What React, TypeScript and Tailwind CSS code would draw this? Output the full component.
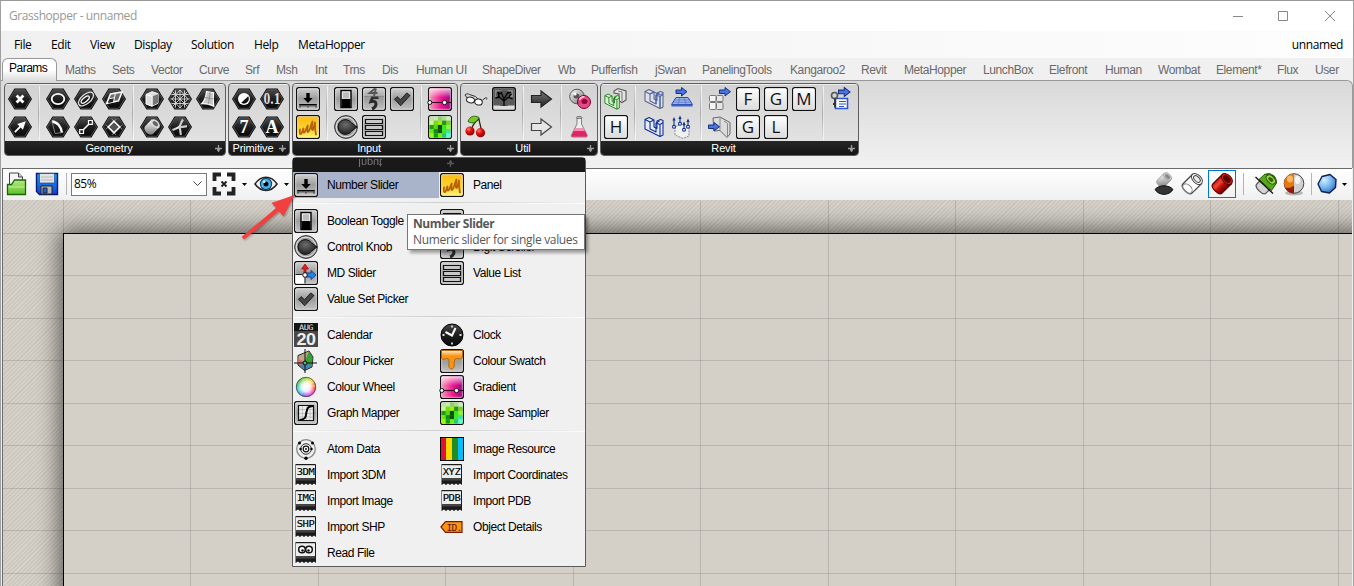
import React from "react";

type IconFn = () => React.ReactElement;

const S = ({ children }: { children?: React.ReactNode }) => (
  <svg width="24" height="24" viewBox="0 0 24 24" className="block shrink-0 overflow-visible">
    {children}
  </svg>
);

/* ---------- shared gradients ---------- */
const Defs = () => (
  <svg className="absolute h-0 w-0">
    <defs>
      <linearGradient id="hex" x1="0" y1="0" x2="0" y2="1">
        <stop offset="0" stopColor="#4a4a4a" />
        <stop offset=".5" stopColor="#1e1e1e" />
        <stop offset="1" stopColor="#080808" />
      </linearGradient>
      <linearGradient id="tile" x1="0" y1="0" x2="0" y2="1">
        <stop offset="0" stopColor="#d2d2d2" />
        <stop offset=".5" stopColor="#9c9c9c" />
        <stop offset="1" stopColor="#c4c4c4" />
      </linearGradient>
      <linearGradient id="lite" x1="0" y1="0" x2="0" y2="1">
        <stop offset="0" stopColor="#ffffff" />
        <stop offset=".5" stopColor="#ececec" />
        <stop offset="1" stopColor="#dadada" />
      </linearGradient>
      <linearGradient id="gold" x1="0" y1="0" x2="0" y2="1">
        <stop offset="0" stopColor="#fdb913" />
        <stop offset=".6" stopColor="#ffd52e" />
        <stop offset="1" stopColor="#fff27a" />
      </linearGradient>
      <linearGradient id="steel" x1="0" y1="0" x2="1" y2="1">
        <stop offset="0" stopColor="#ffffff" />
        <stop offset="1" stopColor="#6e6e6e" />
      </linearGradient>
      <linearGradient id="red" x1="0" y1="0" x2="1" y2="0">
        <stop offset="0" stopColor="#d01810" />
        <stop offset=".3" stopColor="#f04838" />
        <stop offset=".6" stopColor="#b80c08" />
        <stop offset="1" stopColor="#700000" />
      </linearGradient>
      <linearGradient id="green" x1="0" y1="0" x2="0" y2="1">
        <stop offset="0" stopColor="#b4ea80" />
        <stop offset="1" stopColor="#5fbf25" />
      </linearGradient>
      <linearGradient id="pink" x1="0" y1="0" x2="1" y2="0">
        <stop offset="0" stopColor="#f0a4bc" />
        <stop offset=".55" stopColor="#f2148c" />
        <stop offset="1" stopColor="#8e0a84" />
      </linearGradient>
      <linearGradient id="gloss" x1="0" y1="0" x2="0" y2="1">
        <stop offset="0" stopColor="#ffffff" stopOpacity=".75" />
        <stop offset="1" stopColor="#ffffff" stopOpacity="0" />
      </linearGradient>
      <linearGradient id="dark" x1="0" y1="0" x2="0" y2="1">
        <stop offset="0" stopColor="#777777" />
        <stop offset="1" stopColor="#222222" />
      </linearGradient>
      <linearGradient id="blue" x1="0" y1="0" x2="0" y2="1">
        <stop offset="0" stopColor="#1c9cf0" />
        <stop offset="1" stopColor="#1040d8" />
      </linearGradient>
      <radialGradient id="knob" cx=".4" cy=".35" r=".7">
        <stop offset="0" stopColor="#6c6c6c" />
        <stop offset="1" stopColor="#1a1a1a" />
      </radialGradient>
      <radialGradient id="cherry" cx=".35" cy=".3" r=".8">
        <stop offset="0" stopColor="#ff7868" />
        <stop offset=".4" stopColor="#e01010" />
        <stop offset="1" stopColor="#780000" />
      </radialGradient>
      <radialGradient id="ball" cx=".35" cy=".3" r=".8">
        <stop offset="0" stopColor="#d4f0ff" />
        <stop offset=".5" stopColor="#78b8f0" />
        <stop offset="1" stopColor="#2a64b8" />
      </radialGradient>
      <radialGradient id="shade" cx=".5" cy=".5" r=".5">
        <stop offset="0" stopColor="#ffffff" />
        <stop offset=".45" stopColor="#ffffff" stopOpacity=".9" />
        <stop offset="1" stopColor="#ffffff" stopOpacity="0" />
      </radialGradient>
    </defs>
  </svg>
);

const Hex = ({ children }: { children?: React.ReactNode }) => (
  <S>
    <path d="M6.5 1.5h11L24 12l-6.5 10.5h-11L0 12z" fill="#0a0a0a" />
    <path d="M7.2 2.7h9.6L22.6 12l-5.8 9.3H7.2L1.4 12z" fill="url(#hex)" stroke="#5c5c5c" strokeWidth=".8" />
    {children}
  </S>
);

const Tile = ({ fill = "url(#tile)", children }: { fill?: string; children?: React.ReactNode }) => (
  <S>
    <rect x=".6" y=".6" width="22.8" height="22.8" rx="2.2" fill={fill} stroke="#111" strokeWidth="1.2" />
    <rect x="1.7" y="1.7" width="20.6" height="20.6" rx="1.2" fill="none" stroke="#fff" strokeOpacity=".55" />
    {children}
  </S>
);

/* ---------- geometry ---------- */
const PointIcon: IconFn = () => (
  <Hex><path d="M8.6 8.6l6.8 6.8M15.4 8.6l-6.8 6.8" stroke="#fff" strokeWidth="2.8" /></Hex>
);
const VectorIcon: IconFn = () => (
  <Hex><path d="M6.2 16.500l5.200-5.200-2.200-2.200 8.600-2.900-2.900 8.600-2.200-2.200-5.200 5.200z" fill="#fff" /></Hex>
);
const CircleIcon: IconFn = () => (
  <Hex><ellipse cx="12" cy="12" rx="6.3" ry="5.2" fill="none" stroke="#fff" strokeWidth="1.8" /></Hex>
);
const OrbitIcon: IconFn = () => (
  <Hex>
    <g transform="rotate(-40 12 12)" fill="none" stroke="#ddd">
      <ellipse cx="12" cy="12" rx="9" ry="4.6" strokeWidth="1.3" />
      <ellipse cx="11" cy="12" rx="5" ry="2.1" strokeWidth="1.3" stroke="#fff" />
    </g>
  </Hex>
);
const RectIcon: IconFn = () => (
  <Hex>
    <path d="M4.500 16.500l4-9.500 11.500-2-3.500 8.800z" fill="#999" fillOpacity=".6" stroke="#fff" strokeWidth="1.500" />
    <path d="M6 16l2-4.600 4-.8-1 4.400z" fill="#222" />
    <path d="M7.500 11.600l5-.9.900-4.300M11.500 15l1-4.300" stroke="#fff" fill="none" />
  </Hex>
);
const ArcIcon: IconFn = () => (
  <Hex>
    <path d="M6 6.5c5 .4 9.5 5 10 11.5" fill="none" stroke="#fff" strokeWidth="2.4" />
    <path d="M6 6.5l3 12M9 18.500l8-1" stroke="#888" strokeWidth=".9" />
  </Hex>
);
const LineIcon: IconFn = () => (
  <Hex>
    <path d="M8 16l8-8" stroke="#fff" strokeWidth="1.6" />
    <path d="M5.7 14.7h3.8v3.8H5.7zM14.5 5.5h3.8v3.8h-3.8z" fill="#222" stroke="#fff" strokeWidth="1.2" />
  </Hex>
);
const PlaneIcon: IconFn = () => (
  <Hex>
    <path d="M4 9.8L14.2 20M9.8 4L20 14.2M4 14.2L14.2 4M9.8 20L20 9.8" stroke="#aaa" strokeWidth=".8" />
    <path d="M12 6.2l5.8 5.8-5.8 5.8L6.2 12z" fill="#555" stroke="#fff" strokeWidth="1.6" />
  </Hex>
);
const BoxIcon: IconFn = () => (
  <Hex>
    <path d="M6 7.5l6-2.8 6 2v9.6l-6.2 3L6 17z" fill="#ddd" stroke="#fff" />
    <path d="M12.2 9.4L18 7v9l-6 3z" fill="#777" />
    <path d="M6 7.5l6.2 1.9v9.8" stroke="#fff" fill="none" />
  </Hex>
);
const MeshIcon: IconFn = () => (
  <Hex>
    <path d="M7.5 3.5v17M12 3v18M16.5 3.5v17M3.5 7.5h17M2.5 12h19M3.5 16.5h17M5 5l14 14M19 5L5 19M12 3l-8 9 8 9 8-9z" fill="none" stroke="#d8d8d8" strokeWidth=".9" />
  </Hex>
);
const SurfaceIcon: IconFn = () => (
  <Hex>
    <path d="M10.5 4.5l7 1.2c-.4 4-.2 9 .2 13.4-4-1.8-7.5-2.6-12-2.4 3-3 4.3-7 4.8-12.2z" fill="#c4c4c4" stroke="#fff" strokeWidth="1.2" />
    <path d="M14 5.2c-.5 5-.8 8.5-2 12M9 10.5l8.5 1.5" stroke="#888" strokeWidth=".8" fill="none" />
  </Hex>
);
const BrepIcon: IconFn = () => (
  <Hex>
    <g transform="rotate(45 12 12)">
      <path d="M6.5 7v9c0 5 11 5 11 0V7z" fill="url(#steel)" />
      <ellipse cx="12" cy="7.3" rx="5.5" ry="3.3" fill="#ddd" />
      <ellipse cx="12" cy="7.3" rx="3.2" ry="1.9" fill="#666" />
    </g>
  </Hex>
);
const TwistIcon: IconFn = () => (
  <Hex>
    <path d="M4.5 15c3-1.2 5.5-1.8 7-3.500 1.500-2 1.300-4 3.500-7M11.500 11.800c2.500.8 4.500-.4 7.500-.6M11.500 11.800c1 2.500.5 5 1.500 8" fill="none" stroke="#ccc" strokeWidth="2.2" />
    <path d="M8 13.500c2-.8 3-1.500 4-3" stroke="#fff" fill="none" />
  </Hex>
);

/* ---------- primitive ---------- */
const glyph = "Liberation Serif, serif";
const BoolIcon: IconFn = () => (
  <Hex>
    <circle cx="12" cy="12" r="6" fill="#fff" />
    <path d="M16.2 9.200a5 5 0 0 1-7 6.600z" fill="#111" />
  </Hex>
);
const NumberIcon: IconFn = () => (
  <Hex><text x="12" y="17" textAnchor="middle" fontFamily={glyph} fontWeight="700" fontSize="16" textLength="17" lengthAdjust="spacingAndGlyphs" fill="#ddd">0.1</text></Hex>
);
const IntIcon: IconFn = () => (
  <Hex><text x="12" y="18" textAnchor="middle" fontFamily={glyph} fontWeight="700" fontSize="18" fill="#fff">7</text></Hex>
);
const TextIcon: IconFn = () => (
  <Hex><text x="12" y="18" textAnchor="middle" fontFamily={glyph} fontWeight="700" fontSize="18" fill="#fff">A</text></Hex>
);

/* ---------- input ---------- */
const SliderIcon: IconFn = () => (
  <Tile>
    <path d="M10.3 6h3.400v5h3L12 16 7.300 11h3z" fill="#000" />
    <path d="M3.5 17.500h17M4 17v3.500M6 17.500v2M8 17.500v2M10 17.500v2M12 17v3.500M14 17.500v2M16 17.500v2M18 17.500v2M20 17v3.500" stroke="#000" strokeWidth="1" />
  </Tile>
);
const PanelIcon: IconFn = () => (
  <Tile fill="url(#gold)">
    <path d="M4 14.500c-.5 2.500-.2 5 1 4.500 1.200-.6 1.500-4 2.500-5.500-.3 2-.2 4.500.8 4 1.500-1 2-5 3.500-7-.4 3-.8 7 .3 6.500C14 16 15 9 16.500 6.500c-.6 4-1 8.500 0 8.500 1.300-.3 1.500-5 2.500-7.500 0 4 0 8 1 12" fill="none" stroke="#b5620a" strokeWidth="1.800" strokeLinejoin="round" strokeLinecap="round" />
  </Tile>
);
const ToggleIcon: IconFn = () => (
  <Tile>
    <rect x="7" y="3.500" width="10" height="17" fill="#e8e8e8" stroke="#000" strokeWidth="1.4" />
    <path d="M7.500 12h9v8h-9z" fill="#000" />
    <path d="M9 5.500h6v6H9z" fill="#bbb" />
  </Tile>
);
const ScrollerIcon: IconFn = () => (
  <Tile>
    <path d="M13 1.500L7.500 6h8M14 1.500L12 9" fill="none" stroke="#555" strokeWidth="1.800" />
    <path d="M16.500 10.500h-6l-1.500 4c3-.8 5 .2 5 2.500 0 2-1.500 4-4 5" fill="none" stroke="#2a2a2a" strokeWidth="3" />
    <path d="M2 9.700h20" stroke="#777" strokeWidth=".8" />
  </Tile>
);
const CheckIcon: IconFn = () => (
  <Tile><path d="M4.500 12.300l2.700-2.700 3.300 3.200 6.300-6.900 3.200 2.600-9.300 10.200z" fill="#444" stroke="#181818" strokeWidth=".9" /></Tile>
);
const KnobIcon: IconFn = () => (
  <S>
    <circle cx="12" cy="12" r="11.4" fill="#9a9a9a" stroke="#333" strokeWidth="1" />
    <circle cx="12" cy="12" r="9.800" fill="none" stroke="#e4e4e4" strokeWidth="1" />
    <path d="M23 12l-5.500 4.200a7.400 7.400 0 1 1 0-8.400z" fill="url(#knob)" stroke="#111" />
  </S>
);
const ListIcon: IconFn = () => (
  <Tile>
    <path d="M3.500 4.500h17v4h-17zM3.500 10.500h17v4h-17zM3.500 16.500h17v4h-17z" fill="#c8c8c8" stroke="#111" strokeWidth="1.2" />
  </Tile>
);
const GradientIcon: IconFn = () => (
  <Tile fill="url(#pink)">
    <path d="M1.500 1.500h21v9h-21z" fill="url(#gloss)" />
    <path d="M1 15.500h22" stroke="#3a0020" strokeWidth="1.2" />
    <circle cx="1.8" cy="15.500" r="2" fill="#fff" stroke="#111" />
    <circle cx="16.500" cy="15.500" r="2.200" fill="#fff" stroke="#111" />
  </Tile>
);
const SAMPLES = [
  "#b8e8a0", "#c8eca8", "#8cd070", "#a8e080", "#c8f0b8",
  "#d0f4a0", "#70e010", "#a0f000", "#289020", "#70d818",
  "#18a010", "#60d010", "#085008", "#30f010", "#88f830",
  "#60e818", "#188818", "#0c5808", "#40e828", "#30e8a0",
  "#a8f020", "#10a010", "#70f010", "#20c870", "#58ffd0",
];
const SamplerIcon: IconFn = () => (
  <Tile>
    {SAMPLES.map((c, i) => (
      <rect key={i} x={1.5 + (i % 5) * 4.2} y={1.5 + Math.floor(i / 5) * 4.2} width="4.3" height="4.3" fill={c} />
    ))}
  </Tile>
);

/* ---------- util ---------- */
const GlassesIcon: IconFn = () => (
  <S>
    <path d="M3.500 11.500L1 8c1.500-1.500 3-1.500 4.500-.5l6 2 2.500 2.500M18.500 13l3.500-2.500c1 .3 1 1.200.5 2" fill="none" stroke="#333" strokeWidth="1" />
    <ellipse cx="6.500" cy="13" rx="4" ry="2.800" fill="#fff" stroke="#222" transform="rotate(12 6.5 13)" />
    <ellipse cx="14.500" cy="15" rx="3.800" ry="3" fill="#fff" stroke="#222" transform="rotate(12 14.5 15)" />
  </S>
);
const TreeIcon: IconFn = () => (
  <Tile fill="#111">
    <path d="M1.500 1.500h21v18h-21z" fill="#5a5a5a" />
    <path d="M3 3h18v7H3z" fill="#a8a8a8" opacity=".6" />
    <path d="M12 20V11M12 14L6 9M12 14l6-5M12 12L9 5M12 12l4-7M8 10L3.500 11M16 10l4.500 2M9 7L5 5M15 7l4-2M7 9l-1-4M17 9l2.500-2" stroke="#000" strokeWidth="1.3" />
    <path d="M4 7c2-5 14-5 16 0-1 4-3 1-5 4-3-2-4 1-6-1-3 1-5 1-5-3z" fill="#000" fillOpacity=".4" />
    <path d="M1.500 18.500h21v4h-21z" fill="#ddd" /><path d="M7 19c3-1 7-1 10 0z" fill="#000" />
  </Tile>
);
const CherryIcon: IconFn = () => (
  <S>
    <path d="M8 14c0-4 3-7 7-10 .5 4 2 8 2.500 12" fill="none" stroke="#2a1a0a" strokeWidth="1.2" />
    <path d="M4 6.500c2-5.500 6-6.500 11-4-2 4.500-6 7-11 4z" fill="#7cc828" stroke="#2c6a10" />
    <circle cx="6" cy="16" r="4.600" fill="url(#cherry)" />
    <circle cx="16.500" cy="17.700" r="4.600" fill="url(#cherry)" />
  </S>
);
const ArrowDarkIcon: IconFn = () => (
  <S><path d="M1.500 8.500h9.500V4l10.500 8L11 20v-4.500H1.500z" fill="url(#dark)" stroke="#222" strokeWidth="1.2" /></S>
);
const ArrowLiteIcon: IconFn = () => (
  <S><path d="M1.500 8.500h9.500V4l10.500 8L11 20v-4.500H1.500z" fill="#e6e6e6" stroke="#444" strokeWidth="1.2" /></S>
);
const CellsIcon: IconFn = () => (
  <S>
    <circle cx="9" cy="9.500" r="7.300" fill="url(#steel)" stroke="#555" />
    <ellipse cx="8.500" cy="9" rx="3" ry="2.500" fill="#555" /><circle cx="7" cy="7" r="1.600" fill="#fff" />
    <circle cx="16" cy="15" r="6.500" fill="#e83c78" fillOpacity=".9" stroke="#7a0030" />
    <ellipse cx="16.500" cy="14.500" rx="3" ry="2.500" fill="#900040" /><path d="M11.500 13c1-2.500 3-3.500 5-3.200" stroke="#ffc8dc" strokeWidth="1.500" fill="none" />
  </S>
);
const FlaskIcon: IconFn = () => (
  <S>
    <path d="M9 2.500h4.500v6.500l5.500 11c.6 1.500 0 2-1.500 2H5c-1.500 0-2.200-.6-1.500-2L9 9z" fill="#eee" stroke="#666" strokeWidth=".8" />
    <path d="M7 13h8.500l3.500 7c.5 1.200 0 1.800-1 1.800H4.700c-1 0-1.500-.6-1-1.800z" fill="#e02468" />
    <path d="M7 13h8.500l1.500 3H5.500z" fill="#f490b4" />
    <ellipse cx="11.200" cy="2.500" rx="2.800" ry="1" fill="#ccc" stroke="#555" strokeWidth=".8" />
  </S>
);

/* ---------- revit ---------- */
const Letter = ({ c }: { c: string }) => (
  <Tile fill="url(#lite)">
    <text x="12" y="18" textAnchor="middle" fontFamily="Open Sans, sans-serif" fontSize="17" fill="#111">{c}</text>
  </Tile>
);
const LH: IconFn = () => <Letter c="H" />;
const LF: IconFn = () => <Letter c="F" />;
const LG: IconFn = () => <Letter c="G" />;
const LM: IconFn = () => <Letter c="M" />;
const LL: IconFn = () => <Letter c="L" />;

const Wall = ({ stroke, fill }: { stroke: string; fill: string }) => (
  <g fill={fill} stroke={stroke} strokeWidth="1.1" strokeLinejoin="round">
    <path d="M3 4.500l4-2 5 2.500v7l3 1.500V6l3.500-1.500 2.500 1v14.500l-3 1.500L3 14z" />
    <path d="M3 4.500l5 2.500v7l6 3V8l4 1.500v12M8 7l4-2M14 8l3.500-2M18 9.500l3-2" fill="none" />
  </g>
);
const WallGreenIcon: IconFn = () => (
  <S>
    <path d="M10 4l4-2.500 8 2.500v9l-4 2.500-3-1.500V7l-5-1z" fill="#e4e4e4" stroke="#555" strokeWidth="1.1" />
    <path d="M14 4l4 1v9" stroke="#777" fill="none" />
    <g transform="translate(-1.5 5) scale(.8)"><Wall stroke="#187818" fill="#d8f4d0" /></g>
  </S>
);
const WallGreyIcon: IconFn = () => (
  <S>
    <Wall stroke="#5c6684" fill="#dde2ec" />
    <path d="M8 7l4-2 6 3 3-1.500" stroke="#3c60c8" fill="none" />
    <path d="M14 8v9M18 9.500v11" stroke="#3c60c8" />
  </S>
);
const WallBlueIcon: IconFn = () => <S><Wall stroke="#102c9c" fill="#e6eefc" /></S>;
const BlueArrow = () => (
  <path d="M0 2.500h5.500V0L11 4.200 5.500 8.500V6H0z" fill="#4a74dc" stroke="#14308c" />
);
const FloorIcon: IconFn = () => (
  <S>
    <g transform="translate(6 .5)"><BlueArrow /></g>
    <path d="M6 10.500h12l4.500 7h-21z" fill="#9cb4ec" stroke="#2848a8" />
    <path d="M1.500 17.500h21v2h-21z" fill="#3c60c8" />
    <path d="M4.500 13h15M3.500 15.300h17M10 10.500l-2 7M14 10.500l2 7" stroke="#4868c0" strokeWidth=".6" />
  </S>
);
const EdgesIcon: IconFn = () => (
  <S>
    <path d="M5 12l6-3 8 4v8l-6 2.500L5 20z" fill="#f0f0f0" stroke="#888" strokeDasharray="2 1" />
    <path d="M4 12V4M10 8V2M18 12V5M14 15V8" stroke="#14308c" strokeWidth="1.1" />
    <path d="M2.400 5.500L4 2l1.600 3.500zM8.400 4L10 .5 11.600 4zM16.400 7L18 3.500 19.600 7zM12.400 10L14 6.500l1.600 3.500z" fill="#14308c" />
    <path d="M2.700 10.500h2.600v2.600H2.700zM8.700 7.500h2.600v2.600H8.700zM16.700 10.500h2.600v2.600h-2.600zM12.700 13.500h2.600v2.600h-2.600z" fill="#e8f0ff" stroke="#14308c" />
  </S>
);
const GridArrowIcon: IconFn = () => (
  <S>
    <rect x="1.500" y="8.500" width="6.500" height="6" rx="1" fill="#f4f4f4" stroke="#777" />
    <rect x="8.500" y="8.500" width="6.500" height="6" rx="1" fill="#e6e6e6" stroke="#777" />
    <rect x="1.500" y="15.500" width="6.500" height="7" rx="1" fill="#f4f4f4" stroke="#777" />
    <rect x="8.500" y="15.500" width="6.500" height="7" rx="1" fill="#e6e6e6" stroke="#777" />
    <g transform="translate(11.5 .5)"><BlueArrow /></g>
  </S>
);
const PanelArrowIcon: IconFn = () => (
  <S>
    <path d="M5 3l7-1 10 5.500V19l-3 3.500-7-7-6 .5z" fill="#dcdcdc" stroke="#666" />
    <path d="M12 2.500v13M16 6l3.500 2.500v13" stroke="#888" fill="none" />
    <g transform="translate(.5 7.500)"><BlueArrow /></g>
  </S>
);
const KeyDocIcon: IconFn = () => (
  <S>
    <g transform="translate(8.5 .5) scale(1.05)"><BlueArrow /></g>
    <path d="M5.500 11.500h12v10h-12z" fill="#fff" stroke="#2c58d0" strokeWidth="1.6" />
    <path d="M9 14.500h7M9 17h7M9 19.500h5" stroke="#2c58d0" strokeWidth="1.2" />
    <circle cx="4.500" cy="8.500" r="3" fill="none" stroke="#555" strokeWidth="1.6" />
    <path d="M5 11.500v9M5 17h-2" stroke="#333" strokeWidth="1.8" />
  </S>
);

/* ---------- menu only ---------- */
const MDIcon: IconFn = () => (
  <Tile>
    <path d="M1.500 13.500h9v9h-9z" fill="#fff" />
    <path d="M10 13V8H7.500L11 3l3.500 5H12v5z" fill="#e42020" stroke="#8c0000" strokeWidth=".6" />
    <path d="M12 12h5V9.500l5 4.500-5 4.500V16h-5z" fill="#2484e8" stroke="#08308c" strokeWidth=".8" />
    <circle cx="11" cy="14" r="2.300" fill="#fff" stroke="#111" />
    <path d="M1.500 13.500H8M11 16.500v6" stroke="#222" />
  </Tile>
);
const CalendarIcon: IconFn = () => (
  <S>
    <path d="M0 0h24v24H0z" fill="#484848" /><path d="M0 0h24v8H0z" fill="#151515" />
    <text x="12" y="7" textAnchor="middle" fontFamily="DejaVu Sans Mono, monospace" fontSize="7.500" textLength="14" lengthAdjust="spacingAndGlyphs" fill="#eee">AUG</text>
    <text x="12" y="21.500" textAnchor="middle" fontFamily="Liberation Sans, sans-serif" fontWeight="700" fontSize="16" textLength="19" lengthAdjust="spacingAndGlyphs" fill="#eee">20</text>
  </S>
);
const ClockIcon: IconFn = () => (
  <S>
    <circle cx="12" cy="12" r="11" fill="url(#hex)" stroke="#000" />
    <path d="M12 2.500v2M12 19.500v2M2.500 12h2M19.500 12h2" stroke="#ddd" strokeWidth="1.8" />
    <path d="M5.500 9l6.500 3.500L15.500 5" fill="none" stroke="#fff" strokeWidth="2" />
  </S>
);
const PickerIcon: IconFn = () => (
  <S>
    <path d="M4 6.500L15 2l4 6-1 10-7.500 3.500L4 16z" fill="#5c9a48" stroke="#222" />
    <path d="M4.500 7L15 2.500 11 12l-6.500 3z" fill="#c4a48c" />
    <path d="M4.500 10l5 2-1 4-4-.5z" fill="#e86878" />
    <path d="M15 2.500L18.500 8l-.800 9.500L11 13z" fill="#38a038" />
    <path d="M11 13l6.500 4.500-7 3.500-4-4z" fill="#4484c0" />
    <path d="M0 14h23M11 0v24" stroke="#111" />
    <circle cx="11" cy="14" r="2" fill="#50b870" stroke="#111" />
  </S>
);
const WHEEL = ["#b4d820", "#ffc810", "#ff7828", "#ff2850", "#f020b0", "#a838f0", "#4060f0", "#20a0f0", "#10c8d0", "#18c080", "#38b838", "#78c828"];
const WheelIcon: IconFn = () => (
  <S>
    {WHEEL.map((c, i) => (
      <path key={i} d="M12 12L12 2A10 10 0 0 1 17.2 3.450z" fill={c} transform={`rotate(${i * 30} 12 12)`} />
    ))}
    <circle cx="12" cy="12" r="10" fill="url(#shade)" />
    <circle cx="12" cy="12" r="9.700" fill="none" stroke="#4a3a3a" strokeOpacity=".7" />
  </S>
);
const SwatchIcon: IconFn = () => (
  <Tile>
    <path d="M1.500 1.500h21v7c-1.500 2.500-4 1-6 1-2 0-2 2-2.500 5 1 4-1 5.500-2.500 5.500S8 18 9 14.500c0-3 .5-5-2-5-2 0-4 2-5.500 0z" fill="#f89410" stroke="#a85800" strokeWidth=".8" />
    <path d="M2 2h20v5H2z" fill="url(#gloss)" />
  </Tile>
);
const GraphIcon: IconFn = () => (
  <Tile>
    <path d="M4.500 4.500h15v15h-15z" fill="#ececec" stroke="#111" strokeWidth="1.2" />
    <path d="M8.500 5v14M12.500 5v14M16 5v14M5 8.500h14M5 12.500h14M5 16h14" stroke="#aaa" strokeWidth=".6" />
    <path d="M5.500 19c7-1 6-3 7-8s2-5.500 6.500-6" fill="none" stroke="#000" strokeWidth="2" />
  </Tile>
);
const AtomIcon: IconFn = () => (
  <S>
    <circle cx="12" cy="12" r="9.300" fill="none" stroke="#888" strokeWidth="1.3" />
    <circle cx="12" cy="12" r="5.300" fill="none" stroke="#333" />
    <circle cx="12" cy="12" r="2.800" fill="#fff" stroke="#111" strokeWidth="1.2" />
    <circle cx="12" cy="12" r=".9" />
    <circle cx="5.500" cy="6" r="1.500" /><circle cx="18.500" cy="6" r="1.500" />
    <circle cx="6.500" cy="12" r="1.200" /><circle cx="17.500" cy="12" r="1.200" /><circle cx="12" cy="21.200" r="1.700" />
  </S>
);
const BarsIcon: IconFn = () => (
  <S>
    <path d="M0 0h24v24H0z" />
    <path d="M1 1h5v22H1z" fill="#dc143c" /><path d="M6 1h6v22H6z" fill="#ffd700" />
    <path d="M12 1h6v22h-6z" fill="#228b22" /><path d="M18 1h5v22h-5z" fill="#00bfff" />
  </S>
);
const Paper = ({ children }: { children?: React.ReactNode }) => (
  <S>
    <path d="M1.500 1h20l.5 1v20l-2-1.500-2 1.500-2-1.500-2 1.500-2-1.500-2 1.500-2-1.500-2 1.500-2-1.500-2.500 1.500V2z" fill="#1a1a1a" />
    <path d="M2 2.200h19V16H2z" fill="#ededed" /><path d="M2 15h19v2.500H2z" fill="#444" />
    {children}
  </S>
);
const Tag = ({ t }: { t: string }) => (
  <Paper>
    <text x="11.500" y="12" textAnchor="middle" fontFamily="DejaVu Sans Mono, monospace" fontSize="9" textLength="17.500" lengthAdjust="spacingAndGlyphs" stroke="#000" strokeWidth=".15">{t}</text>
  </Paper>
);
const T3DM: IconFn = () => <Tag t="3DM" />;
const TIMG: IconFn = () => <Tag t="IMG" />;
const TSHP: IconFn = () => <Tag t="SHP" />;
const TXYZ: IconFn = () => <Tag t="XYZ" />;
const TPDB: IconFn = () => <Tag t="PDB" />;
const ReadIcon: IconFn = () => (
  <Paper>
    <circle cx="8" cy="8.500" r="3.300" fill="#fff" stroke="#111" strokeWidth="1.5" />
    <circle cx="15" cy="8.500" r="3.300" fill="#fff" stroke="#111" strokeWidth="1.5" />
    <circle cx="8.500" cy="9.500" r="1.200" /><circle cx="14.500" cy="9.500" r="1.200" />
  </Paper>
);
const IDIcon: IconFn = () => (
  <S>
    <path d="M1 12l4.500-5.300h16.500v10.600H5.500z" fill="#ff9410" stroke="#7a1c00" strokeWidth="1.2" />
    <text x="14" y="15.500" textAnchor="middle" fontFamily="DejaVu Sans Mono, monospace" fontSize="9.500" letterSpacing="-.8" fill="#5a1400">ID.</text>
  </S>
);

/* ---------- toolbar ---------- */
const FolderIcon: IconFn = () => (
  <S>
    <path d="M4.500 1h9l4 4v8h-13z" fill="#f6f6f6" stroke="#444" /><path d="M13.500 1v4h4" fill="#ccc" stroke="#444" />
    <path d="M2.500 12.500h4l3-4.500h11v14.500h-18z" fill="url(#green)" stroke="#1c6410" strokeWidth="1.3" />
    <path d="M3.500 15h16" stroke="#c8f0a8" />
  </S>
);
const SaveIcon: IconFn = () => (
  <S>
    <path d="M1.500 1.500h21v21H4.500l-3-3z" fill="url(#blue)" stroke="#0a1c78" strokeWidth="1.4" />
    <path d="M4.500 1.500h15v9.500h-15z" fill="#e4e4e4" stroke="#0c4cb0" strokeWidth=".7" /><path d="M6 5h12M6 8h12" stroke="#bbb" />
    <path d="M6 14h11v8H6z" fill="#b8b8b8" stroke="#222" /><path d="M8 16h4v5H8z" fill="#1c60e0" stroke="#222" />
  </S>
);
const ExtentsIcon: IconFn = () => (
  <S>
    <path d="M2.500 9V2.500H9M15 2.500h6.500V9M21.500 15v6.500H15M9 21.500H2.500V15" fill="none" stroke="#222" strokeWidth="3.8" />
    <path d="M9.500 9.500l5 5M14.500 9.500l-5 5" stroke="#222" strokeWidth="2" />
  </S>
);
const EyeIcon: IconFn = () => (
  <S>
    <path d="M1 12c6-9 16-9 22 0-6 8.500-16 8.500-22 0z" fill="#f4f4f4" stroke="#222" strokeWidth="1.5" />
    <circle cx="12" cy="12" r="5.600" fill="#48b4e8" stroke="#12486c" strokeWidth="1.2" /><circle cx="12" cy="12" r="2.500" />
    <circle cx="10.200" cy="9.800" r="1.300" fill="#dff6ff" />
  </S>
);
const Tube = ({ body, rim, hole, edge }: { body: string; rim: string; hole: string; edge: string }) => (
  <g transform="rotate(45 12 12)" stroke={edge}>
    <path d="M5.500 5v13.500c0 4.300 13 4.300 13 0V5z" fill={body} strokeWidth="1.2" />
    <ellipse cx="12" cy="5" rx="6.500" ry="4.200" fill={rim} /><ellipse cx="12" cy="5" rx="4" ry="2.400" fill={hole} />
  </g>
);
const ShadeOffIcon: IconFn = () => (
  <S>
    <g transform="translate(3 -.5) scale(.74)"><Tube body="url(#steel)" rim="#d4d4d4" hole="#888" edge="#999" /></g>
    <path d="M3 17.500c4-5 14-5 18 0-4 6.500-14 6.500-18 0z" fill="#333" stroke="#111" />
  </S>
);
const WireIcon: IconFn = () => (
  <S>
    <Tube body="#fcfcfc" rim="#fff" hole="#eee" edge="#444" />
    <ellipse cx="7.500" cy="16.500" rx="5.500" ry="3.600" transform="rotate(45 7.5 16.5)" fill="none" stroke="#888" />
  </S>
);
const RedTubeIcon: IconFn = () => <S><Tube body="url(#red)" rim="#d82018" hole="#580000" edge="#5a0000" /></S>;
const HalfTubeIcon: IconFn = () => (
  <S>
    <Tube body="#d4d4d4" rim="#78c028" hole="#306808" edge="#555" />
    <path d="M5 7.500l6-5.500 9 2 2.500 7-5 7.500z" fill="#58a818" stroke="#245c08" />
    <ellipse cx="16.800" cy="7.500" rx="5.500" ry="3.500" transform="rotate(45 16.8 7.5)" fill="#9ad848" stroke="#245c08" />
    <ellipse cx="16.800" cy="7.500" rx="3" ry="1.800" transform="rotate(45 16.8 7.5)" fill="#306808" />
    <path d="M1.500 5l17.500 16.500" stroke="#111" strokeWidth="1.3" />
  </S>
);
const HalfBallIcon: IconFn = () => (
  <S>
    <ellipse cx="12" cy="21" rx="9" ry="2.500" fill="#000" fillOpacity=".25" />
    <circle cx="12" cy="11.500" r="9.800" fill="#d0d0d0" stroke="#444" />
    <path d="M12 1.700a9.800 9.800 0 0 0 0 19.600z" fill="#e8780c" />
    <path d="M3 15.500a9.800 9.800 0 0 0 9 5.800V13.500c-3 2.500-6 3-9 2z" fill="#8c1c04" />
    <ellipse cx="8" cy="7" rx="3" ry="3.500" fill="#ffc878" fillOpacity=".8" /><ellipse cx="15.500" cy="8" rx="2.600" ry="4" fill="#fff" fillOpacity=".8" />
  </S>
);
const BallIcon: IconFn = () => (
  <S><path d="M7 4.500l8-2 6 5-.5 8-6 5.500-8-1.500L3 12z" fill="url(#ball)" stroke="#10205c" strokeWidth="1.4" strokeLinejoin="round" /></S>
);

/* ---------- data ---------- */
const TABS: [string, string][] = [
  ["Maths", "w-[47px]"], ["Sets", "w-[39px]"], ["Vector", "w-[48px]"], ["Curve", "w-[46px]"], ["Srf", "w-[31px]"],
  ["Msh", "w-[39px]"], ["Int", "w-[28px]"], ["Trns", "w-[39px]"], ["Dis", "w-[34px]"], ["Human UI", "w-[66px]"],
  ["ShapeDiver", "w-[76px]"], ["Wb", "w-[33px]"], ["Pufferfish", "w-[64px]"], ["jSwan", "w-[47px]"],
  ["PanelingTools", "w-[88px]"], ["Kangaroo2", "w-[71px]"], ["Revit", "w-[43px]"], ["MetaHopper", "w-[79px]"],
  ["LunchBox", "w-[66px]"], ["Elefront", "w-[56px]"], ["Human", "w-[53px]"], ["Wombat", "w-[58px]"],
  ["Element*", "w-[61px]"], ["Flux", "w-[38px]"], ["User", "w-[30px]"],
];

const MENUS: [string, string][] = [
  ["File", "w-[37px]"], ["Edit", "w-[39px]"], ["View", "w-[44px]"], ["Display", "w-[57px]"],
  ["Solution", "w-[63px]"], ["Help", "w-[44px]"], ["MetaHopper", "w-[80px]"],
];

/* Each column holds its top and bottom icon; a null column is a divider. */
type Column = (IconFn | null)[] | null;
const GROUPS: { name: string; width: string; cols: Column[] }[] = [
  { name: "Geometry", width: "w-[222px]", cols: [[PointIcon, VectorIcon], null, [CircleIcon, ArcIcon], [OrbitIcon, LineIcon], [RectIcon, PlaneIcon], null, [BoxIcon, BrepIcon], [MeshIcon, TwistIcon], [SurfaceIcon, null]] },
  { name: "Primitive", width: "w-[62px]", cols: [[BoolIcon, IntIcon], [NumberIcon, TextIcon]] },
  { name: "Input", width: "w-[166px]", cols: [[SliderIcon, PanelIcon], null, [ToggleIcon, KnobIcon], [ScrollerIcon, ListIcon], [CheckIcon, null], null, [GradientIcon, SamplerIcon]] },
  { name: "Util", width: "w-[138px]", cols: [[GlassesIcon, CherryIcon], [TreeIcon, null], null, [ArrowDarkIcon, ArrowLiteIcon], null, [CellsIcon, FlaskIcon]] },
  { name: "Revit", width: "w-[259px]", cols: [[WallGreenIcon, LH], null, [WallGreyIcon, WallBlueIcon], [FloorIcon, EdgesIcon], null, [GridArrowIcon, PanelArrowIcon], [LF, LG], [LG, LL], [LM, null], null, [KeyDocIcon, null]] },
];

type Item = [string, IconFn] | null;
const SECTIONS: [Item, Item][][] = [
  [[["Number Slider", SliderIcon], ["Panel", PanelIcon]]],
  [
    [["Boolean Toggle", ToggleIcon], ["Button", ListIcon]],
    [["Control Knob", KnobIcon], ["Digit Scroller", ScrollerIcon]],
    [["MD Slider", MDIcon], ["Value List", ListIcon]],
    [["Value Set Picker", CheckIcon], null],
  ],
  [
    [["Calendar", CalendarIcon], ["Clock", ClockIcon]],
    [["Colour Picker", PickerIcon], ["Colour Swatch", SwatchIcon]],
    [["Colour Wheel", WheelIcon], ["Gradient", GradientIcon]],
    [["Graph Mapper", GraphIcon], ["Image Sampler", SamplerIcon]],
  ],
  [
    [["Atom Data", AtomIcon], ["Image Resource", BarsIcon]],
    [["Import 3DM", T3DM], ["Import Coordinates", TXYZ]],
    [["Import Image", TIMG], ["Import PDB", TPDB]],
    [["Import SHP", TSHP], ["Object Details", IDIcon]],
    [["Read File", ReadIcon], null],
  ],
];

const Plus = ({ className }: { className: string }) => (
  <svg width="7" height="7" viewBox="0 0 7 7" className={className}>
    <path d="M3.500 0v7M0 3.500h7M2 5h3M3 6h1" stroke="currentColor" strokeWidth="1.3" />
  </svg>
);

const MenuCell = ({ item, active }: { item: Item; active?: boolean }) => (
  <div className={`flex h-[26px] w-[146px] items-center pl-px ${active ? "bg-[#a9b4ca]" : ""}`}>
    {item && (
      <>
        {React.createElement(item[1])}
        <span className="ml-[9px] whitespace-nowrap">{item[0]}</span>
      </>
    )}
  </div>
);

const DropMenu = () => (
  <div className="absolute left-[292px] top-[156px] z-10 w-[294px] rounded-t-sm border border-[#5a5a5a] bg-[#f0f0f0] font-['Liberation_Sans',sans-serif] text-[12px] leading-[14px] tracking-[-0.42px] text-black">
    <div className="flex h-[14px] overflow-hidden bg-[#191919] pl-[65px] text-[11px] tracking-[-0.1px] text-[#777]">
      <span className="inline-block h-[14px] w-[24px] -scale-y-100 leading-[18px]">Input</span>
      <Plus className="ml-[65px] mt-[2px] -scale-y-100 text-[#555]" />
    </div>
    {SECTIONS.map((rows, s) => (
      <React.Fragment key={s}>
        {s > 0 && (
          <div className="flex h-[10px] items-center">
            <div className="h-[2px] w-full border-b border-white/70 bg-linear-to-r from-[#f0f0f0] via-[#cfcfcf] to-[#f0f0f0]" />
          </div>
        )}
        {rows.map(([a, b], r) => (
          <div key={r} className="flex">
            <MenuCell item={a} active={s === 0} />
            <MenuCell item={b} />
          </div>
        ))}
      </React.Fragment>
    ))}
  </div>
);

const RibbonGroup = ({ name, width, cols }: { name: string; width: string; cols: Column[] }) => (
  <div className={`flex h-[73px] shrink-0 flex-col overflow-hidden rounded-[4px] border border-[#5e5e5e] bg-linear-to-b from-[#d2d2d2] to-[#e6e6e6] ${width}`}>
    <div className="flex h-[58px] border-t border-white/60 pl-px">
      {cols.map((col, i) =>
        col ? (
          <div key={i} className="flex w-7 flex-col">
            {col.map((Ico, r) => (
              <div key={r} className="flex h-7 items-center justify-center">{Ico && <Ico />}</div>
            ))}
          </div>
        ) : (
          <div key={i} className="flex w-[10px] justify-center py-px">
            <div className="w-[2px] border-r border-white/70 bg-linear-to-b from-transparent via-[#aaa] to-transparent" />
          </div>
        ),
      )}
    </div>
    <div className="flex h-[14px] items-center bg-linear-to-b from-[#262626] to-[#141414] text-white">
      <span className="flex-1 pr-[2px] text-center text-[11px] leading-[13px] tracking-[-0.15px]">{name}</span>
      <Plus className="mr-[3px] text-[#999]" />
    </div>
  </div>
);

const Caret = () => (
  <svg width="5" height="3" viewBox="0 0 5 3" className="block"><path d="M0 0h5L2.500 3z" /></svg>
);
const Divider = () => <div className="h-[22px] w-px bg-[#b4b4b4]" />;

const hLines = Array.from({ length: 9 }, (_, i) => Math.floor(33 + i * 42.5));
const vLines = Array.from({ length: 11 }, (_, i) => Math.floor(60 + i * 127.5));

export default function App() {
  return (
    <div className="relative flex h-[586px] w-[1354px] flex-col overflow-hidden border-t border-[#999] bg-[#f0f0f0] font-['Liberation_Sans',sans-serif]">
      <Defs />
      <div className="pointer-events-none absolute inset-0 z-[5] border-x border-[#a0a0a0]" />
      <header className="flex h-[30px] items-center bg-white pl-[9px] font-['Open_Sans',sans-serif] text-[12px] text-[#999]">
        <span className="tracking-[-0.42px]">Grasshopper - unnamed</span>
        <svg width="104" height="12" viewBox="0 0 104 12" className="ml-auto mr-[18px]" fill="none" stroke="#888">
          <path d="M1 6.500h10M46.500 1.500h9v9h-9zM93 1l10 10M103 1L93 11" />
        </svg>
      </header>
      <nav className="flex h-[27px] items-center bg-linear-to-r from-[#f0f0f0] to-[#fdfdfd] pl-[14px] font-['Open_Sans',sans-serif] text-[12px] tracking-[-0.4px] text-black">
        {MENUS.map(([t, w]) => <span key={t} className={`${w} shrink-0`}>{t}</span>)}
        <span className="ml-auto mr-[11px]">unnamed</span>
      </nav>

      <div className="z-[1] -mb-px flex h-[23px] pl-[2px] text-[12px] tracking-[-0.4px] text-[#6a6a6a]">
        <div className="w-[55px] rounded-t-[6px] border border-b-0 border-[#999] bg-linear-to-b from-white via-white to-[#dcdcdc] pl-[6px] pt-[2px] leading-[14px] tracking-[-0.5px] text-black">
          Params
        </div>
        <div className="flex flex-1 items-center pl-[8px]">
          {TABS.map(([t, w]) => <span key={t} className={`${w} shrink-0 whitespace-nowrap`}>{t}</span>)}
        </div>
      </div>

      <section className="mr-px flex h-[88px] shrink-0 gap-[2px] rounded-tr-[6px] border-t border-r border-[#999] bg-linear-to-b from-[#d9d9d9] to-[#f2f2f2] pl-[4px] pt-[2px]">
        {GROUPS.map((g) => <RibbonGroup key={g.name} {...g} />)}
      </section>

      <div className="ml-[2px] mr-[2px] flex h-[32px] shrink-0 items-center border-t border-l border-[#6b6b6b] bg-linear-to-b from-white to-[#f0f0f0] pb-px pl-[2px]">
        <FolderIcon />
        <div className="ml-[6px]"><SaveIcon /></div>
        <div className="ml-[7px] mr-[4px]"><Divider /></div>
        <div className="flex h-[23px] w-[136px] items-center justify-between border border-[#7a7a7a] bg-white pl-[2px] pr-[4px] font-['Open_Sans',sans-serif] text-[12px] tracking-[-0.5px]">
          85%
          <svg width="9" height="6" viewBox="0 0 9 6" fill="none" stroke="#444"><path d="M.5.5l4 4 4-4" /></svg>
        </div>
        <div className="ml-[5px] mr-[6px]"><ExtentsIcon /></div>
        <Caret />
        <div className="ml-[7px] mr-[6px]"><EyeIcon /></div>
        <Caret />
        <div className="ml-auto flex items-center">
          <ShadeOffIcon />
          <div className="mx-[4px]"><WireIcon /></div>
          <div className="mr-[7px] border border-[#0078d7] p-px"><RedTubeIcon /></div>
          <Divider />
          <div className="ml-[10px] mr-[4px]"><HalfTubeIcon /></div>
          <HalfBallIcon />
          <div className="ml-[5px] mr-[3px]"><Divider /></div>
          <BallIcon />
          <div className="ml-[3px] mr-[5px]"><Caret /></div>
        </div>
      </div>

      <main className="relative ml-[2px] mr-[2px] flex-1 overflow-hidden border-l border-[#6b6b6b] bg-[repeating-linear-gradient(135deg,#cbc7be_0_1.5px,#d6d2ca_1.5px_3px)] pl-[60px] pt-[33px]">
        <div className="h-[500px] w-[1400px] border-l border-t border-black bg-[#d4d0c8] shadow-[0_0_22px_3px_rgba(0,0,0,0.6)]" />
        <svg width="1349" height="386" className="absolute left-0 top-0" shapeRendering="crispEdges">
          {hLines.map((y) => <rect key={y} x="0" y={y} width="1349" height="1" fill="#000" fillOpacity=".12" />)}
          {vLines.map((x) => <rect key={x} x={x} y="0" width="1" height="386" fill="#000" fillOpacity=".12" />)}
        </svg>
      </main>

      <DropMenu />

      <div className="absolute left-[407px] top-[213px] z-20 h-[36px] w-[178px] whitespace-nowrap border border-[#767676] bg-white pl-[5px] pt-[1px] font-['Open_Sans',sans-serif] text-[12px] leading-[16px] text-[#575757] shadow-[3px_3px_3px_rgba(0,0,0,0.35)]">
        <div className="font-bold tracking-[-0.42px]">Number Slider</div>
        <div className="tracking-[-0.33px]">Numeric slider for single values</div>
      </div>

      <svg width="60" height="50" viewBox="0 0 60 50" className="absolute left-[239px] top-[190px] z-30 overflow-visible drop-shadow-[1px_1px_1px_rgba(0,0,0,0.3)]">
        <path d="M5 48.500L2.700 45.800 37 17l-4.500-5L55.500 4 44.500 25.500 40 20.500z" fill="#f24040" />
      </svg>
    </div>
  );
}
